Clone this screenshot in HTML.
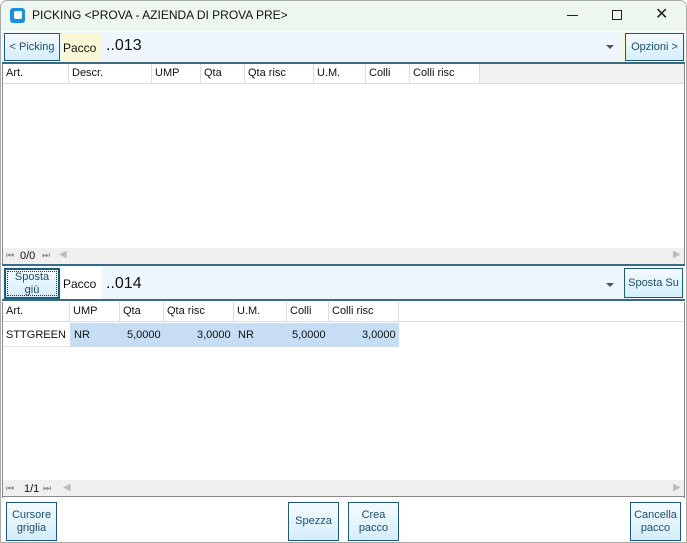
<!DOCTYPE html>
<html><head><style>
*{box-sizing:border-box;margin:0;padding:0}
body{width:687px;height:543px;background:#fff;font-family:"Liberation Sans",sans-serif;font-size:11px;color:#111;position:relative;overflow:hidden}
.a{position:absolute}
.btn{position:absolute;border:1px solid #1e5a78;background:linear-gradient(#f4fbff,#d5eefb);color:#1d4d6c;display:flex;align-items:center;justify-content:center;text-align:center;font-size:11px;line-height:13px}
.hdr{position:absolute;height:20px;border-bottom:1px solid #ddd;background:#fff}
.hdr div{position:absolute;top:0;height:19px;border-right:1px solid #ddd;padding:3px 0 0 3px;font-size:11px}
.nav{position:absolute;left:3px;width:681px;height:16px;background:#f0f0f0;font-size:11px}
.arrow{position:absolute;width:0;height:0;border-left:4px solid transparent;border-right:4px solid transparent;border-top:4px solid #555}
</style></head><body>
<div class="a" style="left:0;top:0;width:687px;height:543px;border:1px solid #aaa;border-radius:7px 7px 0 0"></div>
<div class="a" style="left:1px;top:1px;width:685px;height:30px;background:#eef6f0;border-radius:7px 7px 0 0"></div>
<div class="a" style="left:10px;top:8px;width:15px;height:15px;background:#1a8fe0;border-radius:3px"></div>
<div class="a" style="left:14px;top:11px;width:8px;height:8px;background:#fff;border-radius:2px"></div>
<div class="a" style="left:32px;top:8px;font-size:12px">PICKING &lt;PROVA - AZIENDA DI PROVA PRE&gt;</div>
<div class="a" style="left:567px;top:15px;width:11px;height:1px;background:#222"></div>
<div class="a" style="left:612px;top:10px;width:10px;height:10px;border:1px solid #222"></div>
<div class="a" style="left:655px;top:4px;font-size:16px;color:#222">✕</div>

<div class="a" style="left:2px;top:32px;width:683px;height:32px;background:#eef7fd;border-bottom:2px solid #3b6b80"></div>
<div class="btn" style="left:4px;top:33px;width:56px;height:28px;">&lt; Picking</div>
<div class="a" style="left:61px;top:33px;width:40px;height:28px;background:#fbf8d8;padding-top:8px;padding-left:2px;font-size:12px">Pacco</div>
<div class="a" style="left:106px;top:37px;font-size:16px">..013</div>
<div class="arrow" style="left:606px;top:45px"></div>
<div class="a" style="left:622px;top:33px;width:3px;height:28px;background:#fbf8d8"></div>
<div class="btn" style="left:625px;top:33px;width:59px;height:28px;">Opzioni &gt;</div>

<div class="hdr" style="left:3px;top:64px;width:681px;background:#f2f2f2">
<div style="left:0;width:66px;background:#fff">Art.</div><div style="left:66px;width:83px;background:#fff">Descr.</div><div style="left:149px;width:49px;background:#fff">UMP</div><div style="left:198px;width:44px;background:#fff">Qta</div><div style="left:242px;width:69px;background:#fff">Qta risc</div><div style="left:311px;width:52px;background:#fff">U.M.</div><div style="left:363px;width:44px;background:#fff">Colli</div><div style="left:407px;width:70px;background:#fff">Colli risc</div></div>
<div class="a" style="left:2px;top:64px;width:1px;height:201px;background:#888"></div>
<div class="a" style="left:684px;top:64px;width:1px;height:201px;background:#888"></div>
<div class="nav" style="top:248px"><span class="a" style="left:3px;top:2px;color:#888;font-size:9px">⏮</span><span class="a" style="left:17px;top:2px">0/0</span><span class="a" style="left:39px;top:2px;color:#888;font-size:9px">⏭</span><span class="a" style="left:56px;top:1px;color:#bbb;font-size:10px">◀</span><span class="a" style="left:670px;top:1px;color:#bbb;font-size:10px">▶</span></div>

<div class="a" style="left:2px;top:264px;width:683px;height:37px;background:#eef7fd;border-top:2px solid #3b6b80;border-bottom:2px solid #3b6b80"></div>
<div class="a" style="left:61px;top:267px;width:40px;height:32px;background:#fff"></div>
<div class="btn" style="left:4px;top:268px;width:56px;height:31px;border:2px solid #1e5a78;outline:1px dotted #333;outline-offset:-4px">Sposta<br>giù</div>
<div class="a" style="left:63px;top:277px;font-size:12px">Pacco</div>
<div class="a" style="left:106px;top:275px;font-size:16px">..014</div>
<div class="arrow" style="left:606px;top:283px"></div>
<div class="btn" style="left:624px;top:268px;width:59px;height:30px;">Sposta Su</div>

<div class="hdr" style="left:3px;top:302px;width:681px">
<div style="left:0;width:67px">Art.</div><div style="left:67px;width:50px">UMP</div><div style="left:117px;width:44px">Qta</div><div style="left:161px;width:70px">Qta risc</div><div style="left:231px;width:53px">U.M.</div><div style="left:284px;width:42px">Colli</div><div style="left:326px;width:70px">Colli risc</div></div>
<div class="a" style="left:3px;top:322px;width:396px;height:25px;border-bottom:1px solid #e4e4e4"></div>
<div class="a" style="left:70px;top:323px;width:329px;height:24px;background:#c6def5"></div>
<div class="a" style="left:6px;top:329px">STTGREEN</div>
<div class="a" style="left:74px;top:329px">NR</div>
<div class="a" style="left:127px;top:329px">5,0000</div>
<div class="a" style="left:197px;top:329px">3,0000</div>
<div class="a" style="left:238px;top:329px">NR</div>
<div class="a" style="left:292px;top:329px">5,0000</div>
<div class="a" style="left:362px;top:329px">3,0000</div>
<div class="a" style="left:2px;top:302px;width:1px;height:196px;background:#888"></div>
<div class="a" style="left:684px;top:302px;width:1px;height:196px;background:#888"></div>
<div class="nav" style="top:480px;height:17px;border-bottom:1px solid #888"><span class="a" style="left:3px;top:3px;color:#888;font-size:9px">⏮</span><span class="a" style="left:21px;top:3px">1/1</span><span class="a" style="left:40px;top:3px;color:#888;font-size:9px">⏭</span><span class="a" style="left:60px;top:2px;color:#bbb;font-size:10px">◀</span><span class="a" style="left:670px;top:2px;color:#bbb;font-size:10px">▶</span></div>

<div class="btn" style="left:6px;top:502px;width:51px;height:39px">Cursore<br>griglia</div>
<div class="btn" style="left:288px;top:502px;width:51px;height:39px">Spezza</div>
<div class="btn" style="left:348px;top:502px;width:51px;height:39px">Crea<br>pacco</div>
<div class="btn" style="left:630px;top:502px;width:51px;height:39px">Cancella<br>pacco</div>
</body></html>
